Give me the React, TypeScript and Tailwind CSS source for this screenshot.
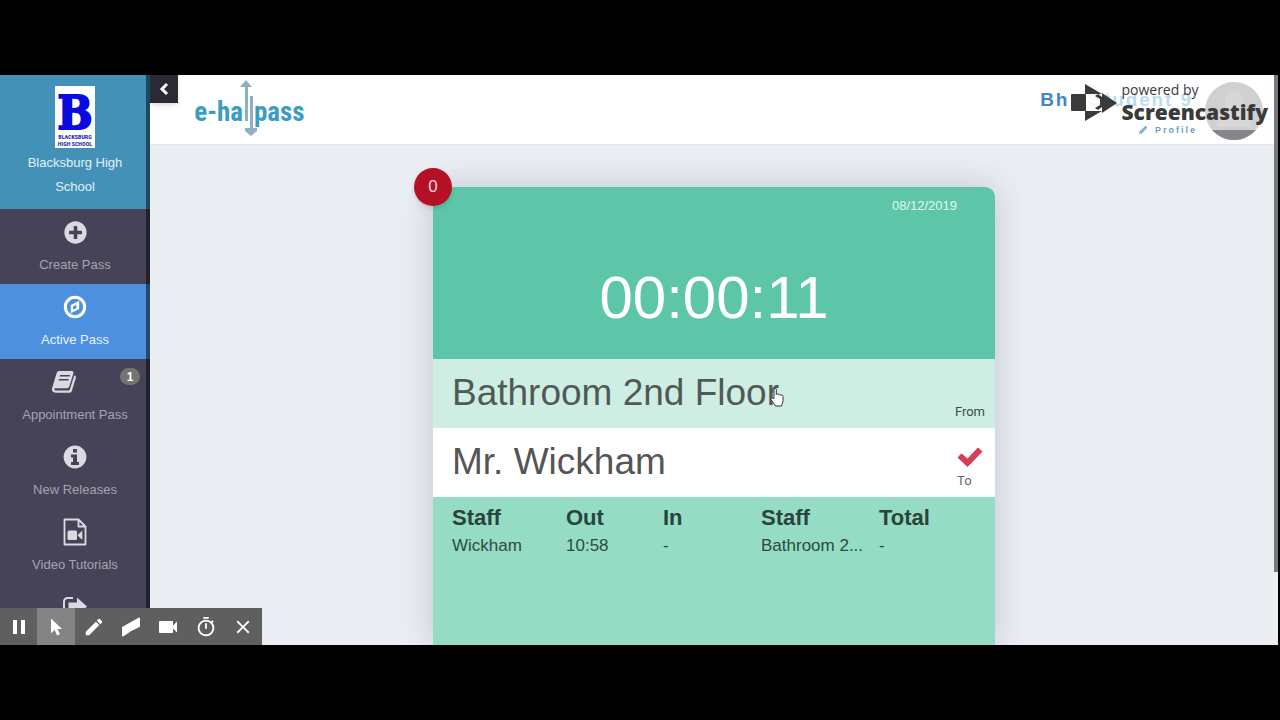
import type { ReactNode } from "react";
import { FaPencilAlt, FaPlusCircle } from "react-icons/fa";
import { MdClose, MdEdit, MdOutlineTimer, MdPause, MdVideocam } from "react-icons/md";

function CompassIcon() {
  return (
    <svg viewBox="0 0 24 24" className="size-6" aria-hidden>
      <circle cx="12" cy="12" r="9.7" fill="none" stroke="currentColor" strokeWidth="3" />
      <path fillRule="evenodd" fill="currentColor" d="M16.2 5.8v8.2L7.8 18.2V10zM10 11.4v3.4l3.400-1.700V9.700z" />
    </svg>
  );
}

function InfoIcon() {
  return (
    <svg viewBox="0 0 24 24" className="size-6" aria-hidden>
      <circle cx="12" cy="12" r="11.400" fill="currentColor" />
      <path fill="#464358" d="M10 4h4v3.500h-4zM8 9.500h6V17h2v3H8v-3h2v-4.500H8z" />
    </svg>
  );
}

function BookIcon() {
  return (
    <svg viewBox="0 0 26 24" className="h-6 w-[26px]" aria-hidden>
      <path
        fillRule="evenodd"
        fill="currentColor"
        d="M8.2 1h12.6c1.3 0 2 1 1.6 2.3l-4 13c-.4 1.3-1.3 2-2.6 2H4.4c-.8 0-1.2.5-1 1.2.2.8 1 1 1.8 1h12.2c.7 0 1.2-.3 1.4-1L23.3 5.3c1.4.4 1.9 1.3 1.5 2.6l-3.9 12.8c-.4 1.3-1.5 2.1-2.8 2.1H4.6c-2.3 0-4.2-2-3.6-4.2L5.5 3.6C6 2 6.7 1 8.2 1zM9.200 5l-.5 1.600h9.800L19 5zM8 9l-.5 1.600h9.800l.5-1.600z"
      />
    </svg>
  );
}

function VideoFileIcon() {
  return (
    <svg viewBox="0 0 24 28" className="h-7 w-6" aria-hidden>
      <path fill="none" stroke="currentColor" strokeWidth="1.8" strokeLinejoin="round" d="M1.5 1.5h14l7 7v18h-21zM15.5 1.5v7h7" />
      <rect x="4.500" y="12.500" width="9.500" height="9.500" rx="1.500" fill="currentColor" />
      <path fill="currentColor" d="M14.5 17.2l4.800-4.700v9.400z" />
    </svg>
  );
}

function ShareIcon() {
  return (
    <svg viewBox="0 0 24 24" className="size-6" aria-hidden>
      <path fill="none" stroke="currentColor" strokeWidth="2" d="M10 2H4.5A3.5 3.5 0 0 0 1 5.5v13A3.5 3.5 0 0 0 4.5 22H16" />
      <path fill="currentColor" d="M14 1.5l10 9-10 9v-5H5.500v-8H14z" />
    </svg>
  );
}

function CheckIcon() {
  return (
    <svg viewBox="0 0 26 20" className="h-5 w-[26px] text-[#da3b55]" aria-hidden>
      <path fill="currentColor" d="M1 10.500l3.500-3.600 6 5.200L21 1l4 3.600L10.500 19.500z" stroke="currentColor" strokeWidth="1" strokeLinejoin="round" />
    </svg>
  );
}

function ChevronIcon() {
  return (
    <svg viewBox="0 0 10 14" className="h-3.5 w-2.5" aria-hidden>
      <path fill="none" stroke="currentColor" strokeWidth="3" d="M8 2L3 7l5 5" />
    </svg>
  );
}

function CursorIcon() {
  return (
    <svg viewBox="0 0 20 20" className="size-5" aria-hidden>
      <path fill="currentColor" d="M5 1.5v14.8l3.700-3.400 2.400 5.600 2.800-1.200-2.400-5.300h4.500z" />
    </svg>
  );
}

function EraserIcon() {
  return (
    <svg viewBox="0 0 20 20" className="size-5" aria-hidden>
      <path fill="currentColor" stroke="currentColor" strokeWidth="2" strokeLinejoin="round" d="M2 10.500L18 1.500v7.500L10 13 2 18.500z" />
    </svg>
  );
}

function HandPointer() {
  return (
    <svg viewBox="0 0 14 20" className="h-5 w-3.5" aria-hidden>
      <path
        fill="#fff"
        stroke="#333"
        strokeWidth="1"
        strokeLinejoin="round"
        d="M4 11.5V2.5c0-1.600 2.300-1.600 2.300 0V7.500c.4-.9 2-.8 2.200.3.500-.8 2-.6 2.200.5.700-.6 2.300-.3 2.300 1.200v4c0 2.500-1.200 3-1.500 5.500H5.300C4.800 17 2.500 15 1 12.500c-.6-1.200.8-2.200 1.700-1.300z"
      />
    </svg>
  );
}

function SchoolCrest() {
  return (
    <svg viewBox="0 0 40 62" className="h-[62px] w-10" role="img" aria-label="Blacksburg High School crest">
      <rect width="40" height="62" fill="#fff" />
      <text
        x="20"
        y="43"
        textAnchor="middle"
        fill="#0a0ae0"
        stroke="#0a0ae0"
        strokeWidth="2"
        className="font-['DejaVu_Serif_Condensed','DejaVu_Serif',serif] text-[46px] font-bold"
      >
        B
      </text>
      <g textAnchor="middle" fill="#2222a8" className="font-['Roboto_Condensed','Liberation_Sans',sans-serif] text-[6px] font-bold">
        <text x="20" y="53">BLACKSBURG</text>
        <text x="20" y="60">HIGH SCHOOL</text>
      </g>
    </svg>
  );
}

function Logo() {
  return (
    <svg viewBox="0 0 112 62" className="h-[62px] w-28" role="img" aria-label="e-hallpass">
      <g fill="#3b9cc6" className="font-['Roboto_Condensed','Liberation_Sans',sans-serif] text-[27px] font-bold">
        <text x="49" y="42" textAnchor="end">e-ha</text>
        <text x="60" y="42">pass</text>
      </g>
      <g fill="#8db0c4">
        <path d="M49 8h-3l6-7 6 7h-4v34h-3V8z" />
        <path d="M56 17h3v32h4v3l-6 5-6-5v-3h5z" />
      </g>
    </svg>
  );
}

type NavItem = { label: string; icon: ReactNode; active?: boolean; badge?: number };

const navItems: NavItem[] = [
  { label: "Create Pass", icon: <FaPlusCircle className="size-[23px]" /> },
  { label: "Active Pass", icon: <CompassIcon />, active: true },
  { label: "Appointment Pass", icon: <BookIcon />, badge: 1 },
  { label: "New Releases", icon: <InfoIcon /> },
  { label: "Video Tutorials", icon: <VideoFileIcon /> },
];

const tools = [
  { label: "Pause", icon: <MdPause className="size-6" /> },
  { label: "Cursor", icon: <CursorIcon />, active: true },
  { label: "Pen", icon: <MdEdit className="size-[22px]" /> },
  { label: "Eraser", icon: <EraserIcon /> },
  { label: "Camera", icon: <MdVideocam className="size-6" /> },
  { label: "Timer", icon: <MdOutlineTimer className="size-[22px]" /> },
  { label: "Close", icon: <MdClose className="size-[22px]" /> },
];

function Sidebar() {
  return (
    <aside className="relative w-[150px] shrink-0 overflow-hidden bg-[#464358] text-center text-[13px]">
      <div className="flex h-[134px] flex-col items-center bg-[#4391b6] px-4 pt-[11px] leading-6 text-[#e2f0f6]">
        <SchoolCrest />
        <p className="pt-[3px]">Blacksburg High School</p>
      </div>
      <nav>
        {navItems.map(({ label, icon, active, badge }) => (
          <a
            key={label}
            href="#"
            className={`relative flex h-[75px] flex-col items-center ${active ? "bg-[#4d90de] text-white" : "text-[#dadae0]"}`}
          >
            <span className={`flex h-[46px] items-center ${badge ? "pr-[22px]" : ""}`}>{icon}</span>
            <span className={active ? "text-[#e8f2fc]" : "text-[#a5a4ae]"}>{label}</span>
            {badge && (
              <span className="absolute right-2.5 top-[9px] flex h-[17px] w-5 items-center justify-center rounded-full bg-[#73736f] text-xs font-bold text-white">
                {badge}
              </span>
            )}
          </a>
        ))}
        <a href="#" aria-label="Logout" className="flex h-[75px] justify-center pt-3 text-[#dadae0]">
          <ShareIcon />
        </a>
      </nav>
      <div className="absolute inset-y-0 right-0 w-1 bg-black/50" />
    </aside>
  );
}

function Watermark() {
  return (
    <div className="absolute right-2.5 top-1.5 flex gap-1 text-[#3a3a3a]">
      <svg viewBox="0 0 46 40" className="mt-0.5 h-10 w-[46px]" aria-hidden>
        <path fill="#fff" d="M12 2l33 18-33 18z" opacity=".8" />
        <rect x="0" y="11" width="15" height="17" rx="1" fill="currentColor" />
        <path fill="currentColor" d="M14 1l17 10H14zM14 38l17-10H14zM31 10l15 10-15 10v-6l-4 3-3-2 5-3v-6l-5-3 3-2 4 3z" />
      </svg>
      <div className="font-['Open_Sans','Noto_Sans',sans-serif]">
        <p className="text-sm leading-[18px]">powered by</p>
        <p className="text-[21px] font-extrabold leading-[26px]">Screencastify</p>
      </div>
    </div>
  );
}

function TopBar() {
  return (
    <header className="relative flex h-[70px] shrink-0 items-start border-b border-[#e2e5ea] bg-white">
      <button aria-label="Collapse menu" className="flex size-7 items-center justify-center bg-[#292a36] text-white shadow-md">
        <ChevronIcon />
      </button>
      <a href="#" className="ml-4 mt-1">
        <Logo />
      </a>
      <div className="ml-auto flex gap-2 pr-[15px] pt-[7px]">
        <div className="flex flex-col items-end pt-2 font-bold">
          <p className="flex gap-5 pr-1 text-[19px] leading-5 tracking-widest text-[#3f86c8]">
            <span>Bh</span>
            <span className="text-[#bcdcf0]">Student 9</span>
          </p>
          <a href="#" className="flex items-center gap-2 pt-3.5 text-[9px] leading-3 tracking-[2px] text-[#6a9fc8]">
            <FaPencilAlt className="size-2" />
            Profile
          </a>
        </div>
        <svg viewBox="0 0 58 58" className="size-[58px]" aria-hidden>
          <circle cx="29" cy="29" r="29" fill="#d0d0d0" />
          <path fill="#d7d7d7" d="M20 18a9 9 0 0 1 18 0v10h8v17H12V28h8z" />
          <path fill="#86878c" d="M7 48h44A29 29 0 0 1 7 48z" />
        </svg>
      </div>
      <Watermark />
    </header>
  );
}

function PassCard() {
  return (
    <section className="relative mx-auto mt-[42px] flex w-[562px] max-w-full flex-1 flex-col rounded-t-[10px] bg-[#95dcc4] shadow-[0_0_32px_rgba(60,60,90,0.22)]">
      <span className="absolute -left-[19px] -top-[19px] flex size-[38px] items-center justify-center rounded-full bg-[#b51125] text-[17px] text-[#f7d5d9] shadow-md">
        0
      </span>
      <div className="flex h-[172px] flex-col rounded-tr-[10px] bg-[#5dc6a8] text-white">
        <time className="pr-[38px] pt-[9px] text-right text-[13px] leading-5 text-[#e0f8f0]">08/12/2019</time>
        <p className="pt-[46px] text-center text-[60px] leading-[72px]">00:00:11</p>
      </div>
      <div className="relative flex h-[69px] items-center justify-between bg-[#cfeee3] pb-px pl-[19px] pr-2.5">
        <h2 className="text-[37px] text-[#4f5a57]">Bathroom 2nd Floor</h2>
        <span className="self-end pb-1.5 font-['Roboto',sans-serif] text-[13px] text-[#3e4b47]">From</span>
        <span className="absolute left-[337px] top-7">
          <HandPointer />
        </span>
      </div>
      <div className="flex h-[69px] items-center justify-between bg-white pb-px pl-[19px] pr-2.5">
        <h2 className="text-[37px] text-[#555]">Mr. Wickham</h2>
        <div className="flex w-7 flex-col gap-1 self-end pb-1.5 font-['Roboto',sans-serif] text-[13px] text-[#666]">
          <CheckIcon />
          <span>To</span>
        </div>
      </div>
      <table className="ml-[19px] mt-[5px] table-fixed text-left text-[17px] text-[#2d4a41]">
        <colgroup>
          <col className="w-[114px]" />
          <col className="w-[97px]" />
          <col className="w-[98px]" />
          <col className="w-[118px]" />
          <col />
        </colgroup>
        <thead>
          <tr className="text-[22px] leading-8 text-[#29443b]">
            <th>Staff</th>
            <th>Out</th>
            <th>In</th>
            <th>Staff</th>
            <th>Total</th>
          </tr>
        </thead>
        <tbody>
          <tr className="leading-6">
            <td>Wickham</td>
            <td>10:58</td>
            <td>-</td>
            <td>Bathroom 2...</td>
            <td>-</td>
          </tr>
        </tbody>
      </table>
    </section>
  );
}

function RecorderBar() {
  return (
    <div className="absolute bottom-0 left-0 flex h-[37px] w-[262px] bg-[#5f5f5f] text-white">
      {tools.map(({ label, icon, active }) => (
        <button key={label} aria-label={label} className={`flex flex-1 items-center justify-center ${active ? "bg-[#848484]" : ""}`}>
          {icon}
        </button>
      ))}
    </div>
  );
}

export default function App() {
  return (
    <div className="h-screen bg-black py-[75px] pr-0.5 font-['Liberation_Sans',Arial,sans-serif]">
      <div className="relative flex h-full overflow-hidden">
        <Sidebar />
        <main className="relative flex min-w-0 flex-1 flex-col overflow-hidden bg-[#eaedf2]">
          <TopBar />
          <PassCard />
          <div className="absolute right-0 top-0 h-[497px] w-1 bg-[#77787f]" />
        </main>
        <RecorderBar />
      </div>
    </div>
  );
}
